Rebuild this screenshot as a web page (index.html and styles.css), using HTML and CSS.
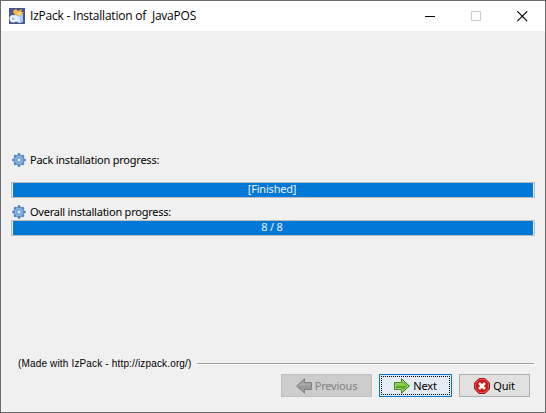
FILE: index.html
```html
<!DOCTYPE html>
<html lang="en">
<head>
<meta charset="utf-8">
<title>IzPack - Installation of JavaPOS</title>
<link rel="stylesheet" href="styles.css">
</head>
<body>
<svg class="defs" width="0" height="0" aria-hidden="true">
  <symbol id="gear" viewBox="0 0 14 14">
    <path d="M7 .3V13.7M.3 7H13.7M2.3 2.3l9.4 9.4M11.7 2.3l-9.4 9.4" stroke="#4a80c0" stroke-width="2.5"/>
    <circle cx="7" cy="7" r="4.9" fill="#8fb9e4" stroke="#4a80c0" stroke-width="1"/>
    <circle cx="7" cy="7" r="2.4" fill="#b5cfeb" stroke="#5b8fca" stroke-width="1"/>
    <circle cx="7" cy="7" r="1.2" fill="#e6e9ec"/>
  </symbol>
</svg>
<div class="window">
  <header class="titlebar">
    <svg class="app-icon" viewBox="0 0 16 16">
      <rect width="16" height="16" fill="#49578f"/>
      <path d="M6 6h8v8l-3 1-5-2z" fill="#a9c9f2"/>
      <path d="M6 7l5 2v6l-5-2z" fill="#dceafd"/>
      <path d="M4 3l3-2 2 2 4-2-1 3 3 0-3 3-3 1-4-2z" fill="#f6b93c"/>
      <path d="M6 3l3 2 4-1-3 3z" fill="#ffe49b"/>
      <circle cx="4.2" cy="10.8" r="3.7" fill="#e9f0fa"/>
      <circle cx="4.2" cy="10.8" r="1.3" fill="#a7bad9"/>
    </svg>
    <span class="title">IzPack - Installation of&nbsp; JavaPOS</span>
    <div class="controls">
      <svg viewBox="0 0 11 11" shape-rendering="crispEdges"><path d="M0 5.5h10" stroke="#000"/></svg>
      <svg viewBox="0 0 11 11"><path d="M.5 .5h9v9h-9z" fill="none" stroke="#ccc"/></svg>
      <svg viewBox="0 0 11 11"><path d="M.3 .3l9.9 9.9M10.2 .3L.3 10.2" stroke="#000" stroke-width="1.15"/></svg>
    </div>
  </header>
  <main class="content">
    <div class="label"><svg><use href="#gear"/></svg><span>Pack installation progress:</span></div>
    <div class="bar first"><div class="fill">[Finished]</div></div>
    <div class="label"><svg><use href="#gear"/></svg><span>Overall installation progress:</span></div>
    <div class="bar"><div class="fill">8 / 8</div></div>
  </main>
  <footer class="footer">
    <div class="credit"><span>(Made with IzPack - http://izpack.org/)</span><i></i></div>
    <div class="buttons">
      <button class="prev" disabled>
        <svg viewBox="0 0 16 16"><path d="M8.5 .8v3.7h7v7h-7v3.7L.7 8z" fill="#999" stroke="#828282"/><path d="M7.5 3v2.5h7v2H2.5z" fill="#aaa"/></svg>
        <span>Previous</span>
      </button>
      <button class="next">
        <svg viewBox="0 0 16 16"><path d="M7.5 .8v3.7h-7v7h7v3.7L15.3 8z" fill="#54a91c" stroke="#357b12"/><path d="M8.3 2.7v2.6h-7v5.4h7v2.6L14 8z" fill="none" stroke="#b4e184" stroke-width=".9"/><path d="M2 6h7V4.5L12.5 8H2z" fill="#8bce4e"/></svg>
        <span>Next</span>
      </button>
      <button class="quit">
        <svg viewBox="0 0 16 16"><path d="M5 .6h6L15.4 5v6L11 15.4H5L.6 11V5z" fill="#cc1414" stroke="#981010"/><path d="M5.3 1.6h5.4l3.7 3.7v5.4l-3.7 3.7H5.3l-3.7-3.7V5.3z" fill="none" stroke="#ee7070" stroke-width=".8"/><path d="M5 5l6 6M11 5l-6 6" stroke="#fff" stroke-width="2.6"/></svg>
        <span>Quit</span>
      </button>
    </div>
  </footer>
</div>
</body>
</html>
```
FILE: styles.css
```css
* { box-sizing: border-box; }
body { margin: 0; background: #f0f0f0; font: 11px/14px "Noto Sans", "Open Sans", sans-serif; color: #000; }
.defs { display: block; }
.window { width: 546px; height: 413px; border: 1px solid #6b6b6b; display: flex; flex-direction: column; background: #f0f0f0; overflow: hidden; }
.titlebar { height: 30px; flex: none; background: #fff; display: flex; align-items: center; padding: 0 13px 0 8px; }
.app-icon { width: 16px; height: 16px; }
.title { margin-left: 5px; font: 12px/16px "Open Sans", sans-serif; letter-spacing: -.22px; white-space: nowrap; }
.controls { margin-left: auto; display: flex; gap: 35px; padding-right: 4px; }
.controls svg { width: 11px; height: 11px; }
.content { flex: 1; padding: 122px 10px 0; }
.label { display: flex; align-items: center; height: 14px; gap: 4px; padding-left: 1px; letter-spacing: -.23px; white-space: nowrap; }
.label svg { width: 14px; height: 14px; }
.bar { height: 16px; border: 1px solid #bcbcbc; padding: 0 1px; margin-top: 1px; }
.bar.first { margin: 15px 0 7px; }
.fill { height: 14px; background: #0078d7; color: #f0f0f0; text-align: center; line-height: 12px; letter-spacing: -.2px; padding-right: 2px; }
.footer { flex: none; height: 55px; padding: 0 11px 0 17px; }
.credit { height: 14px; display: flex; gap: 5px; font: 10px/14px "Liberation Sans", sans-serif; letter-spacing: .16px; white-space: nowrap; }
.credit i { flex: 1; height: 2px; margin-top: 6px; border-top: 1px solid #a0a0a0; border-bottom: 1px solid #fff; }
.buttons { display: flex; justify-content: flex-end; gap: 7px; margin-top: 3px; padding-right: 4px; }
button { height: 23px; margin: 0; padding: 0; display: flex; align-items: center; justify-content: center; gap: 3px; border: 1px solid #adadad; background: #e1e1e1; font: inherit; letter-spacing: -.2px; color: #000; }
button svg { width: 16px; height: 16px; flex: none; }
.prev { width: 91px; background: #ccc; border-color: #bfbfbf; color: #838383; }
.next { width: 73px; border-color: #0078d7; background: #e4ebf3; outline: 1px dotted #000; outline-offset: -3px; }
.quit { width: 71px; }
```
